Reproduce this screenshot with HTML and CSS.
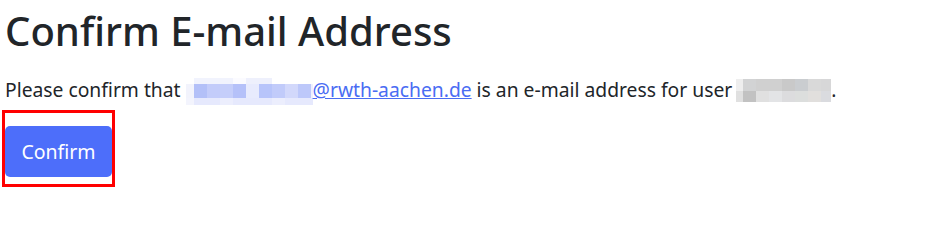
FILE: index.html
```html
<!DOCTYPE html>
<html lang="en">
<head>
  <meta charset="UTF-8">
  <title>Confirm E-mail Address</title>
  <link rel="stylesheet" href="styles.css">
</head>
<body>

<div class="page">
  <h1 class="title">Confirm E-mail Address</h1>

  <p class="lead">Please confirm that <span class="blur blur-mail"><i></i><i></i><i></i><i></i><i></i><i></i><i></i><i></i><i></i><i></i><i></i><i></i><i></i><i></i><i></i><i></i><i></i><i></i><i></i><i></i><i></i><i></i><i></i><i></i><i></i><i></i><i></i><i></i><i></i><i></i><i></i><i></i><i></i></span><a href="#">@rwth-aachen.de</a> is an e-mail address for user<span class="blur blur-user"><i></i><i></i><i></i><i></i><i></i><i></i><i></i><i></i><i></i><i></i><i></i><i></i><i></i><i></i><i></i><i></i></span>.</p>

  <!-- 버튼 강조 박스 -->
  <div class="highlight">
    <button class="btn-confirm" type="submit">Confirm</button>
  </div>
</div>

</body>
</html>
```

FILE: styles.css
```css
body {
  margin: 0;
  background-color: #ffffff;
  color: #212529;
  font-family: "Noto Sans", "Open Sans", sans-serif;
}

.page {
  padding: 0 5px;
}

.title {
  margin: 0;
  padding-top: 7px;
  font-size: 40px;
  font-weight: 500;
  line-height: 1.2;
  color: #212529;
}

.lead {
  margin: 20px 0 5px 0;
  font-size: 19.3px;
  line-height: 30px;
}

.lead a {
  color: #4a6cf3;
  text-decoration: underline;
}

/* 모자이크 처리된 부분 */
.blur {
  display: inline-grid;
  vertical-align: top;
}

.blur i {
  display: block;
}

.blur-mail {
  width: 127px;
  height: 27px;
  margin: 3px 0 0 0;
  grid-template-columns: 8px repeat(9, 13px) 2px;
  grid-template-rows: 6px 14px 7px;
}

/* 1행 */
.blur-mail i:nth-child(1) { background: #fff; }
.blur-mail i:nth-child(2),
.blur-mail i:nth-child(3),
.blur-mail i:nth-child(4) { background: #f1f3fd; }
.blur-mail i:nth-child(5) { background: #fbfbff; }
.blur-mail i:nth-child(6),
.blur-mail i:nth-child(7) { background: #eef0fc; }
.blur-mail i:nth-child(n+8):nth-child(-n+11) { background: #fff; }
/* 2행 */
.blur-mail i:nth-child(12) { background: #f2f3fc; }
.blur-mail i:nth-child(13) { background: #b3c0f8; }
.blur-mail i:nth-child(14) { background: #c3ccfa; }
.blur-mail i:nth-child(15) { background: #c5cefa; }
.blur-mail i:nth-child(16) { background: #b5c1f9; }
.blur-mail i:nth-child(17) { background: #e8ebfd; }
.blur-mail i:nth-child(18) { background: #b7c4fa; }
.blur-mail i:nth-child(19) { background: #c1cbfa; }
.blur-mail i:nth-child(20) { background: #d2d8fb; }
.blur-mail i:nth-child(21) { background: #bdc8fa; }
.blur-mail i:nth-child(22) { background: #eef0fd; }
/* 3행 */
.blur-mail i:nth-child(n+23) { background: #e6e9fd; }
.blur-mail i:nth-child(23) { background: #f3f4fd; }
.blur-mail i:nth-child(26),
.blur-mail i:nth-child(30) { background: #eceefd; }

.blur-user {
  width: 95px;
  height: 23px;
  margin: 4px 0 0 4px;
  grid-template-columns: 7px repeat(6, 13px) 10px;
  grid-template-rows: 12px 11px;
}

.blur-user i:nth-child(1) { background: #eeeeee; }
.blur-user i:nth-child(2) { background: #d2d3d4; }
.blur-user i:nth-child(3) { background: #d0d0d0; }
.blur-user i:nth-child(4) { background: #d0d0d0; }
.blur-user i:nth-child(5) { background: #c9c9c9; }
.blur-user i:nth-child(6) { background: #cacdd0; }
.blur-user i:nth-child(7) { background: #d9d9d9; }
.blur-user i:nth-child(8) { background: #d7d7d8; }
.blur-user i:nth-child(9) { background: #e0e0e0; }
.blur-user i:nth-child(10) { background: #c2c2c2; }
.blur-user i:nth-child(11) { background: #e0e0e0; }
.blur-user i:nth-child(12) { background: #e3e4e6; }
.blur-user i:nth-child(13) { background: #dcdcde; }
.blur-user i:nth-child(14) { background: #dcdedd; }
.blur-user i:nth-child(15) { background: #e1dfdd; }
.blur-user i:nth-child(16) { background: #dadbdf; }

/* 빨간 강조 테두리 */
.highlight {
  display: inline-block;
  margin-left: -3px;
  padding: 13px 0 7px 0;
  border: 3px solid #ff0000;
}

.btn-confirm {
  display: block;
  width: 107px;
  height: 51px;
  padding: 0;
  font-family: "Noto Sans", "Open Sans", sans-serif;
  font-size: 19.5px;
  color: #ffffff;
  background-color: #4d6efa;
  border: none;
  border-radius: 5px;
  cursor: pointer;
}
```
